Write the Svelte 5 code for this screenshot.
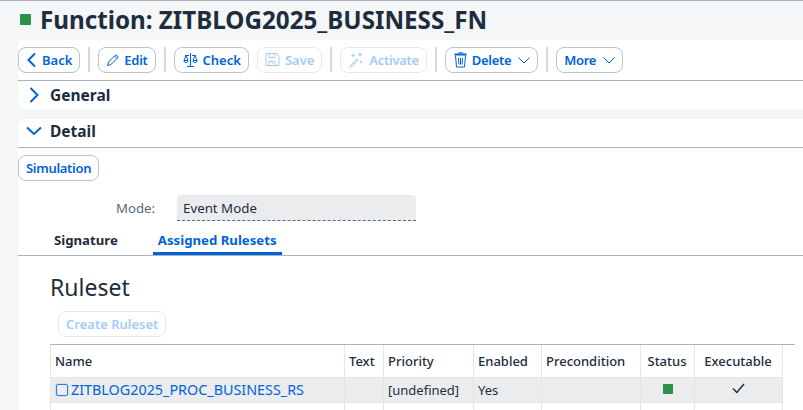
<script>
  const columns = [
    { label: 'Name', width: 294 },
    { label: 'Text', width: 39 },
    { label: 'Priority', width: 90 },
    { label: 'Enabled', width: 68 },
    { label: 'Precondition', width: 99 },
    { label: 'Status', width: 54, center: true },
    { label: 'Executable', width: 88, center: true }
  ];
</script>

<div class="page">
  <header class="title-bar">
    <span class="status-dot"></span>
    <h1>Function: ZITBLOG2025_BUSINESS_FN</h1>
  </header>

  <main class="content">
    <div class="toolbar">
      <button class="btn">
        <svg width="11" height="16" viewBox="0 0 11 16"><path d="M9 1.500 2.500 8 9 14.500" fill="none" stroke="#0064d9" stroke-width="2"/></svg>
        Back
      </button>
      <span class="sep"></span>
      <button class="btn tight edit">
        <svg width="14" height="14" viewBox="0 0 14 14"><path d="M1.500 12.500 2.500 9 9.800 1.700l2.500 2.500L5 11.500zM8.500 3l2.500 2.500" fill="none" stroke="#0064d9" stroke-width="1"/></svg>
        Edit
      </button>
      <span class="sep"></span>
      <button class="btn">
        <svg class="wide" width="15" height="16" viewBox="0 0 15 16"><path d="M7.500 1v13M4 14.500h7M2 3.500h4M9 3.500h4M3 3.500 1 8.500h4zM12 3.500l-2 5h4zM1 8.500a2 2 0 0 0 4 0M10 8.500a2 2 0 0 0 4 0" fill="none" stroke="#0064d9" stroke-width="1"/></svg>
        Check
      </button>
      <button class="btn off">
        <svg width="15" height="15" viewBox="0 0 15 15"><path d="M1 1.500h10.500L14 4v9.500H1zM4 1.500v4h6v-4M4 13.500v-4h6v4M7 11.500h1" fill="none" stroke="#a3cbf7" stroke-width="1"/></svg>
        Save
      </button>
      <span class="sep"></span>
      <button class="btn off tight">
        <svg width="16" height="16" viewBox="0 0 16 16"><path d="M1.500 14.500 9 7l1 1-7.500 7.500z" fill="none" stroke="#a3cbf7"/><path d="M5 1l.7 1.700L7.500 3.300 5.700 4 5 5.700 4.300 4 2.500 3.300l1.800-.6zM12 0l.7 1.800 1.800.7-1.800.7L12 5l-.7-1.800-1.800-.7 1.800-.7zM13 8l.6 1.400 1.400.6-1.400.6L13 12l-.6-1.400L11 10l1.400-.6z" fill="#a3cbf7"/></svg>
        Activate
      </button>
      <span class="sep"></span>
      <button class="btn tight">
        <svg class="wide" width="13" height="16" viewBox="0 0 13 16"><path d="M0.500 2.500h12" stroke="#0064d9" stroke-width="2" fill="none"/><path d="M4.500 1.500V.8h4v.7" stroke="#0064d9" fill="none"/><path d="M1.500 3.500 2.500 15h8l1-11.500M4.500 6l.4 6.500M6.500 6v6.500M8.500 6l-.4 6.500" stroke="#0064d9" fill="none"/></svg>
        Delete
        <svg class="caret" width="12" height="8" viewBox="0 0 12 8"><path d="M.5 1.500 6 7l5.500-5.500" fill="none" stroke="#0064d9"/></svg>
      </button>
      <span class="sep"></span>
      <button class="btn tight">
        More
        <svg class="caret" width="12" height="8" viewBox="0 0 12 8"><path d="M.5 1.500 6 7l5.500-5.500" fill="none" stroke="#0064d9"/></svg>
      </button>
    </div>

    <section class="panel general">
      <svg class="arrow" width="16" height="18" viewBox="0 0 16 18"><path d="M4.500 2 11.500 9l-7 7" fill="none" stroke="#0064d9" stroke-width="2"/></svg>
      <h2>General</h2>
    </section>

    <section class="panel detail">
      <svg class="arrow" width="16" height="16" viewBox="0 0 16 16"><path d="M1 4.500 8 11l7-6.500" fill="none" stroke="#0064d9" stroke-width="2"/></svg>
      <h2>Detail</h2>
    </section>

    <div class="body">
      <button class="btn tight">Simulation</button>

      <div class="field">
        <span class="field-label">Mode:</span>
        <div class="field-value">Event Mode</div>
      </div>

      <div class="tabs">
        <span class="tab">Signature</span>
        <span class="tab active">Assigned Rulesets</span>
      </div>

      <div class="ruleset">
        <h3>Ruleset</h3>
        <button class="btn off create">Create Ruleset</button>

        <div class="table-wrap">
          <table>
            <thead>
              <tr>
                {#each columns as col}
                  <th class:center={col.center} style="width:{col.width}px">{col.label}</th>
                {/each}
              </tr>
            </thead>
            <tbody>
              <tr class="selected">
                <td class="name-cell"><span class="obj-icon"></span><span class="link">ZITBLOG2025_PROC_BUSINESS_RS</span></td>
                <td></td>
                <td>[undefined]</td>
                <td>Yes</td>
                <td></td>
                <td class="center"><span class="status-mini"></span></td>
                <td class="center">
                  <svg class="check" width="13" height="11" viewBox="0 0 13 11"><path d="M1 5.500 4.800 9.500 12 1" fill="none" stroke="#1d2d3e" stroke-width="1.500"/></svg>
                </td>
              </tr>
              <tr class="empty">
                {#each columns as col}<td></td>{/each}
              </tr>
            </tbody>
          </table>
        </div>
      </div>
    </div>
  </main>
</div>

<style>
  :global(body) {
    margin: 0;
    background: #f5f6f7;
  }

  .page {
    width: 803px;
    height: 410px;
    overflow: hidden;
    border-top: 1px solid #a9b4be;
    box-sizing: border-box;
    font-family: "Noto Sans", "Liberation Sans", sans-serif;
    color: #1d2d3e;
    background: #f5f6f7;
  }

  .title-bar {
    height: 39px;
    display: flex;
    align-items: center;
    padding-left: 20px;
    box-sizing: border-box;
  }

  .status-dot {
    width: 11px;
    height: 11px;
    background: #2b9048;
    margin-right: 9px;
    border-radius: 1px;
    margin-top: -2px;
  }

  h1 {
    margin: -2px 0 0;
    font-size: 24.200px;
    font-weight: 700;
    line-height: 39px;
  }

  .content {
    margin-left: 18px;
  }

  .toolbar {
    height: 41px;
    background: #fff;
    border-bottom: 1px solid #a9b4be;
    display: flex;
    align-items: center;
    gap: 8px;
    box-sizing: border-box;
    padding-bottom: 1px;
  }

  .sep {
    width: 2px;
    height: 25px;
    background: #d9d9d9;
  }

  .btn {
    height: 26px;
    padding: 0 7px;
    border: 1px solid #bcc3ca;
    border-radius: 8px;
    background: #fff;
    color: #0064d9;
    font-family: inherit;
    font-size: 13px;
    font-weight: 600;
    display: inline-flex;
    align-items: center;
    gap: 5px;
    box-sizing: border-box;
  }

  .tight {
    letter-spacing: -0.3px;
  }

  .edit {
    gap: 4px;
  }

  .off {
    color: #a3cbf7;
    border-color: #e7e9eb;
  }

  .wide {
    margin-left: 1px;
  }

  .caret {
    margin-left: 2px;
  }

  .panel {
    background: #fff;
    height: 28px;
    display: flex;
    align-items: center;
    padding-left: 8px;
    gap: 8px;
    box-sizing: border-box;
  }

  .general {
    border-radius: 0 0 0 8px;
    margin-bottom: 10px;
  }

  .detail {
    border-radius: 8px 0 0 0;
    border-bottom: 1px solid #a9b4be;
    height: 29px;
    padding-bottom: 4px;
  }

  h2 {
    margin: 0;
    font-size: 15.500px;
    font-weight: 700;
  }

  .body {
    background: #fff;
    padding-top: 7px;
    height: 270px;
  }

  .field {
    display: flex;
    align-items: center;
    margin-top: 14px;
    height: 26px;
  }

  .field-label {
    width: 137px;
    text-align: right;
    font-size: 13.200px;
    color: #556b82;
  }

  .field-value {
    margin-left: 22px;
    width: 239px;
    height: 26px;
    line-height: 26px;
    padding-left: 6px;
    box-sizing: border-box;
    background: #eaecee;
    border-radius: 4px 4px 0 0;
    border-bottom: 1px dashed #556b82;
    font-size: 13.300px;
  }

  .tabs {
    display: flex;
    height: 35px;
    padding-left: 31px;
    border-bottom: 1px solid #a9b4be;
    box-sizing: border-box;
  }

  .tab {
    padding: 0 5px;
    margin-right: 30px;
    font-size: 13.200px;
    font-weight: 700;
    line-height: 38px;
    height: 34px;
    box-sizing: border-box;
  }

  .tab.active {
    color: #0064d9;
    border-bottom: 3px solid #0064d9;
    margin-right: 0;
  }

  .ruleset {
    padding-left: 32px;
  }

  h3 {
    margin: 15px 0 0;
    font-size: 23px;
    font-weight: 400;
    line-height: 33px;
  }

  .create {
    margin: 7px 0 0 8px;
    display: flex;
  }

  .table-wrap {
    margin-top: 7px;
    width: 745px;
    border-top: 1px solid #a9b4be;
  }

  table {
    border-collapse: collapse;
    table-layout: fixed;
    width: 732px;
    font-size: 13px;
  }

  th {
    height: 32px;
    padding: 0 5px 0 4px;
    text-align: left;
    font-weight: 500;
    border-right: 1px solid #e5e5e5;
    border-bottom: 1px solid #e5e5e5;
    box-sizing: border-box;
  }

  th:first-child,
  td:first-child {
    border-left: 1px solid #e5e5e5;
  }

  td {
    height: 25px;
    padding: 0 4px;
    border-right: 1px solid #e5e5e5;
    border-bottom: 1px solid #e5e5e5;
    box-sizing: border-box;
    white-space: nowrap;
  }

  .center {
    text-align: center;
  }

  .selected td {
    background: #eaecee;
  }

  .empty td {
    height: 32px;
  }

  .name-cell {
    padding-left: 5px;
  }

  .obj-icon {
    display: inline-block;
    width: 10px;
    height: 10px;
    border: 1px solid #0064d9;
    box-shadow: 0 0 0 0.500px #a3cbf7;
    border-radius: 2px;
    opacity: 0.8;
    vertical-align: -1px;
    margin-right: 3px;
  }

  .link {
    color: #0064d9;
    font-size: 14.350px;
    font-weight: 400;
  }

  .status-mini {
    display: inline-block;
    width: 10px;
    height: 10px;
    background: #2b9048;
    vertical-align: 1px;
  }

  .check {
    vertical-align: 1px;
  }
</style>
